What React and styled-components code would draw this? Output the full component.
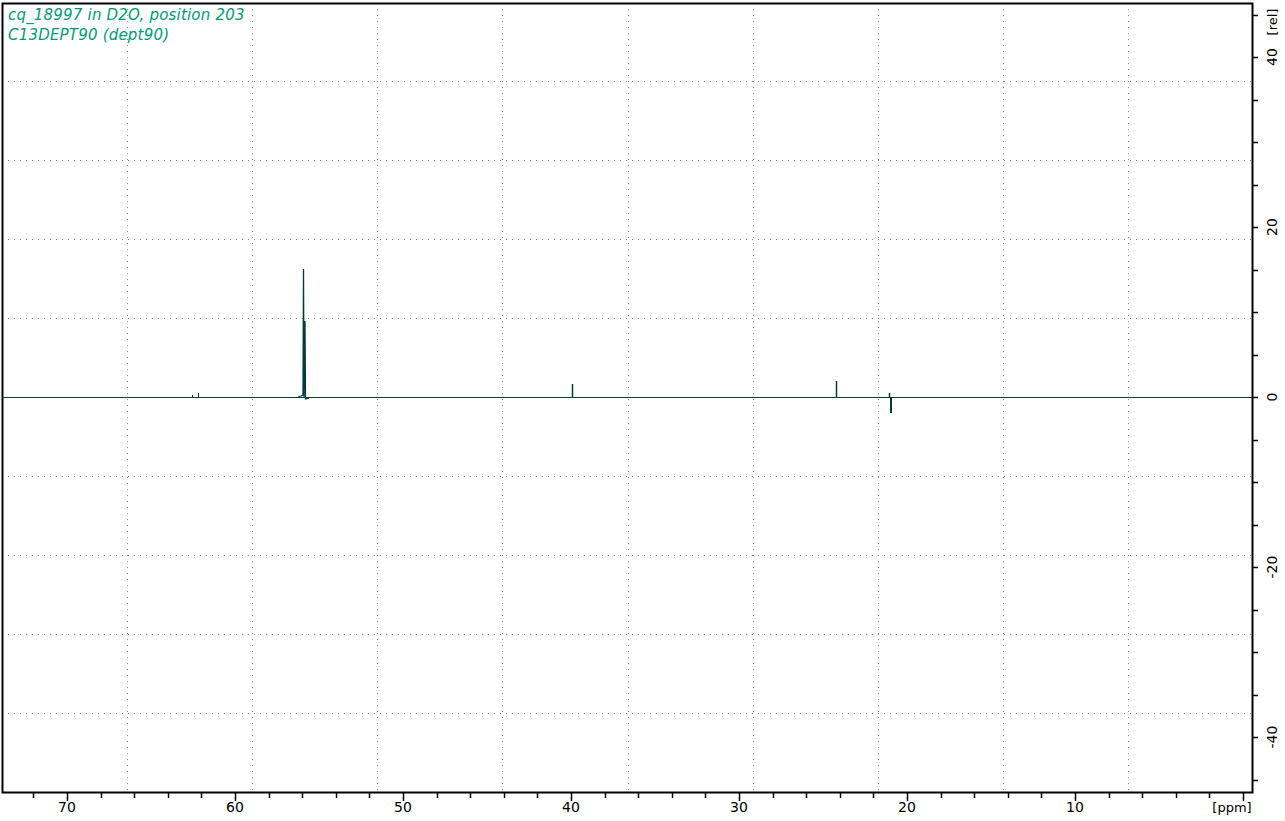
import React from "react";
import styled, { createGlobalStyle } from "styled-components";

const Global = createGlobalStyle`
  html, body { margin: 0; padding: 0; background: #fff; }
`;

const Page = styled.div`
  position: relative;
  width: 1285px;
  height: 821px;
  background: #fff;
  font-family: "DejaVu Sans", "Liberation Sans", sans-serif;
  overflow: hidden;
`;

const Chart = styled.svg`
  display: block;
`;

const Title = styled.div`
  position: absolute;
  left: 8px;
  top: 5px;
  color: #009a78;
  font-style: italic;
  font-size: 15px;
  line-height: 20px;
  letter-spacing: 0.2px;
`;

const L = 2, R = 1252, T = 3, B = 792;
const px = (ppm) => 1243 - ppm * 16.8;
const py = (v) => 397 - v * 8.5;

const vGrid = [127, 252, 377, 502, 628, 753, 878, 1003, 1128];
const hGrid = [81, 160, 239, 318, 476, 555, 634, 713];

export default function App() {
  const xTicks = [];
  for (let p = 0; p <= 72; p += 2) xTicks.push(p);
  const yTicks = [];
  for (let v = -45; v <= 45; v += 5) yTicks.push(v);
  const teal = "#003c3c";
  return (
    <Page>
      <Global />
      <Chart width="1285" height="821">
        {vGrid.map((x) => (
          <line key={x} x1={x + 0.5} x2={x + 0.5} y1={T} y2={B} stroke="#888" strokeDasharray="1 5" />
        ))}
        {hGrid.map((y) => (
          <line key={y} x1={L} x2={R} y1={y + 0.5} y2={y + 0.5} stroke="#888" strokeDasharray="1 5" />
        ))}
        <rect x={L + 0.5} y={T + 0.5} width={R - L} height={B - T} fill="none" stroke="#000" strokeWidth="2" />
        {xTicks.map((p) => (
          <line key={p} x1={Math.round(px(p)) + 0.5} x2={Math.round(px(p)) + 0.5} y1={B} y2={p % 10 === 0 ? B + 9 : B + 6} stroke="#000" strokeWidth="1.5" />
        ))}
        {[70, 60, 50, 40, 30, 20, 10].map((p) => (
          <text key={p} x={px(p)} y={812} fontSize="14" textAnchor="middle" fill="#000" fontFamily="DejaVu Sans, sans-serif">{p}</text>
        ))}
        <text x={1232} y={812} fontSize="13" textAnchor="middle" fill="#000" fontFamily="DejaVu Sans, sans-serif">[ppm]</text>
        {yTicks.map((v) => (
          <line key={v} x1={R} x2={R + 6} y1={Math.round(py(v)) + 0.5} y2={Math.round(py(v)) + 0.5} stroke="#000" strokeWidth="1.5" />
        ))}
        {[40, 20, 0, -20, -40].map((v) => (
          <text key={v} transform={`translate(1277 ${py(v)}) rotate(-90)`} fontSize="14" textAnchor="middle" fill="#000" fontFamily="DejaVu Sans, sans-serif">{v}</text>
        ))}
        <text transform="translate(1277 22) rotate(-90)" fontSize="13" textAnchor="middle" fill="#000" fontFamily="DejaVu Sans, sans-serif">[rel]</text>
        <g stroke={teal} fill="none">
          <line x1={L} x2={R} y1={397.5} y2={397.5} strokeWidth="1.2" />
          <line x1={192.5} x2={192.5} y1={397} y2={395} />
          <line x1={198.5} x2={198.5} y1={397} y2={393} />
          <polyline points="298,397 301,396 303,395 303.5,269 304,397 305,321 305.5,399 309,398" strokeWidth="1.3" />
          <line x1={572.5} x2={572.5} y1={398} y2={384} strokeWidth="1.5" />
          <line x1={836.5} x2={836.5} y1={398} y2={381} strokeWidth="1.5" />
          <line x1={889.5} x2={889.5} y1={397} y2={393} strokeWidth="1.5" />
          <line x1={891} x2={891} y1={397} y2={413} strokeWidth="2" />
        </g>
      </Chart>
      <Title>
        cq_18997 in D2O, position 203
        <br />
        C13DEPT90 (dept90)
      </Title>
    </Page>
  );
}
